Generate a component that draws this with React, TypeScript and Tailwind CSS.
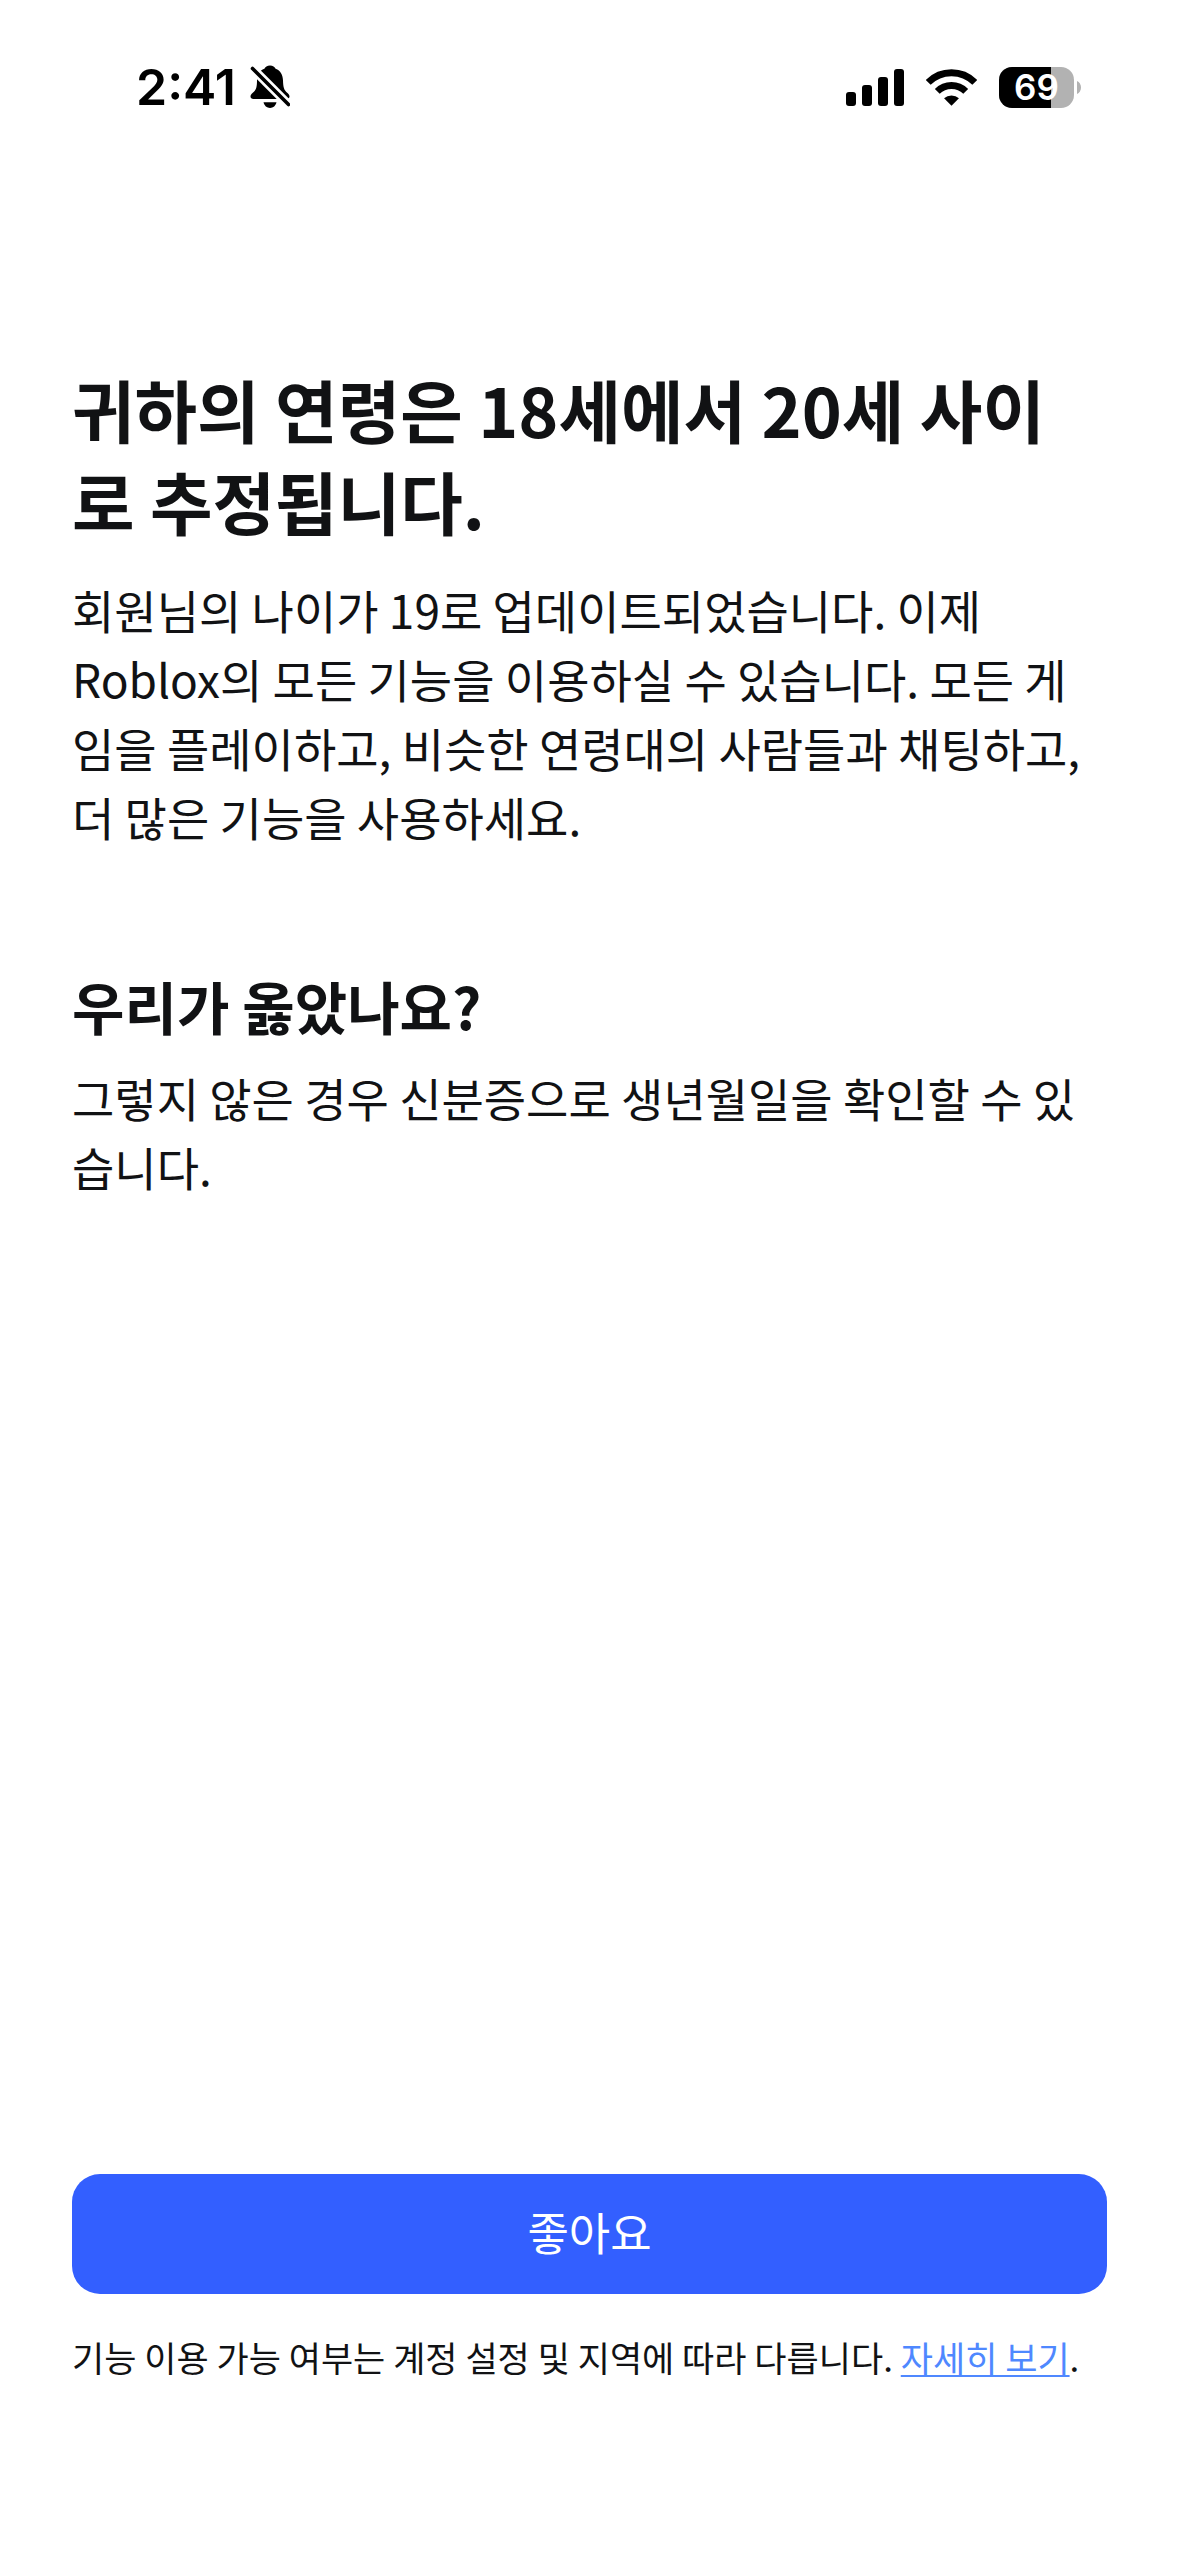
const bars = [
  { x: 0, y: 23, height: 14 },
  { x: 16, y: 16, height: 21 },
  { x: 32, y: 8, height: 29 },
  { x: 48, y: 0, height: 37 },
];

function BellOff() {
  return (
    <svg width="40" height="44" viewBox="0 0 40 44" aria-label="무음 모드">
      <path d="M20 .5c-2.8 0-4.8 1.3-5.6 3.2C9.4 5.6 7 9.8 7 15.2c0 7.600-1 9.800-4.500 12.800C.9 29.400.5 30.500.5 31.500.5 33 1.600 34 3.500 34h33c1.900 0 3-1 3-2.500 0-1-.400-2.100-2-3.500-3.500-3-4.300-5.200-4.500-12.800-.2-5.400-2.400-9.600-7.400-11.500C24.800 1.800 22.800.5 20 .5z" />
      <path d="M13.500 37.300h13c-.8 3.500-3.300 5.700-6.500 5.700s-5.700-2.200-6.500-5.700z" />
      <path d="M-1 0 43 44" stroke="#fff" strokeWidth="9" />
      <path d="M2.500 3.500 38.500 39.500" stroke="#000" strokeWidth="3.600" strokeLinecap="round" />
    </svg>
  );
}

function Signal() {
  return (
    <svg width="58" height="37" viewBox="0 0 58 37" aria-label="신호 세기">
      {bars.map((bar) => (
        <rect key={bar.x} x={bar.x} y={bar.y} width="10" height={bar.height} rx="3" />
      ))}
    </svg>
  );
}

function Wifi() {
  return (
    <svg width="51" height="37" viewBox="0 0 52 37" fill="none" stroke="#000" strokeWidth="7" aria-label="Wi-Fi">
      <path d="M2.300 13.300A33.500 33.500 0 0 1 49.700 13.300" />
      <path d="M11.500 22.500A20.500 20.500 0 0 1 40.500 22.500" />
      <path d="M26 37 18.400 29.400A11.500 11.500 0 0 1 33.600 29.400z" fill="#000" stroke="none" />
    </svg>
  );
}

function Battery({ level }: { level: number }) {
  return (
    <div className="flex items-center gap-[3px]">
      <div className="relative flex h-[41px] w-[75px] items-center justify-center rounded-[13px] bg-[#b2b2b2]">
        <div
          className="absolute inset-y-0 left-0 rounded-l-[13px] bg-black"
          style={{ width: `${level}%` }}
        />
        <span className="relative text-[35px] leading-[41px] font-semibold text-white">{level}</span>
      </div>
      <svg width="4" height="13" viewBox="0 0 4 13">
        <path d="M0 0c2.500 1 4 3.600 4 6.500S2.500 12 0 13z" fill="#b2b2b2" />
      </svg>
    </div>
  );
}

export default function App() {
  return (
    <div className="flex min-h-screen flex-col bg-white font-['Noto_Sans_CJK_KR',sans-serif] text-[#111214]">
      <header className="flex items-center justify-between pt-[57px] pr-[98px] pl-[136px] font-['Inter',sans-serif] text-black">
        <div className="flex items-center gap-[14px]">
          <span className="text-[50px] leading-[60px] font-semibold">2:41</span>
          <BellOff />
        </div>
        <div className="flex items-center gap-[22px]">
          <Signal />
          <Wifi />
          <Battery level={69} />
        </div>
      </header>

      <main className="flex grow flex-col px-[72px] pt-[246px]">
        <section>
          <h1 className="text-[68px] leading-[92px] font-bold">
            귀하의 연령은 18세에서 20세 사이
            <br />로 추정됩니다.
          </h1>
          <p className="mt-[28px] text-[46px] leading-[69px]">
            회원님의 나이가 19로 업데이트되었습니다. 이제
            <br />
            Roblox의 모든 기능을 이용하실 수 있습니다. 모든 게
            <br />
            임을 플레이하고, 비슷한 연령대의 사람들과 채팅하고,
            <br />
            더 많은 기능을 사용하세요.
          </p>
        </section>

        <section className="mt-[116px]">
          <h2 className="text-[57px] leading-[76px] font-bold">우리가 옳았나요?</h2>
          <p className="mt-[20px] text-[46px] leading-[69px]">
            그렇지 않은 경우 신분증으로 생년월일을 확인할 수 있
            <br />
            습니다.
          </p>
        </section>
      </main>

      <footer className="px-[72px] pb-[174px]">
        <button
          type="button"
          className="h-[120px] w-full rounded-[28px] bg-[#335fff] pb-1.5 text-[45px] leading-[69px] text-white"
        >
          좋아요
        </button>
        <p className="mt-[38px] text-[35px] leading-[50px]">
          기능 이용 가능 여부는 계정 설정 및 지역에 따라 다릅니다.{" "}
          <a href="#" className="text-[#4f88ff] underline decoration-2 underline-offset-[3px]">
            자세히 보기
          </a>
          .
        </p>
      </footer>
    </div>
  );
}
